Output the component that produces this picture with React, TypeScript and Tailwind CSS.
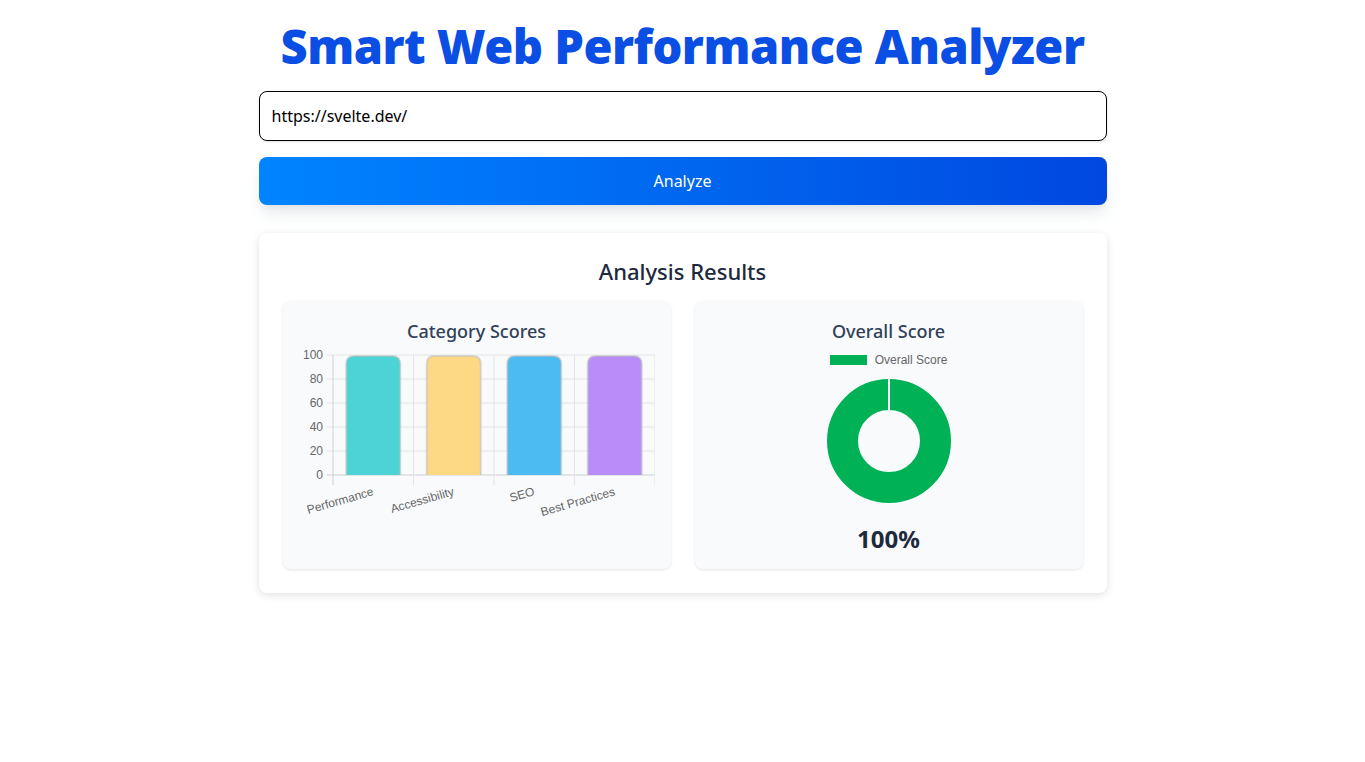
import React from 'react';

const scores = [
  { label: 'Performance', value: 100, fill: '#4bd3d5' },
  { label: 'Accessibility', value: 100, fill: '#fed985' },
  { label: 'SEO', value: 100, fill: '#4bbbf1' },
  { label: 'Best Practices', value: 100, fill: '#b98cf9' },
];

function BarChart() {
  const left = 34;
  const right = 356;
  const top = 10;
  const bottom = 130;
  const step = (right - left) / scores.length;
  const ticks = [100, 80, 60, 40, 20, 0];

  return (
    <svg width="356" height="200" className="block" style={{ fontFamily: '"Liberation Sans", Arial, sans-serif' }}>
      {ticks.map((t, i) => {
        const y = top + i * 24;
        return (
          <g key={t}>
            <line x1={left - 6} x2={right} y1={y} y2={y} stroke={t === 0 ? '#cfcfcf' : '#e4e4e4'} strokeWidth="1" />
            <text x={left - 10} y={y + 4} textAnchor="end" fontSize="12" fill="#666">
              {t}
            </text>
          </g>
        );
      })}
      {[0, 1, 2, 3, 4].map((i) => {
        const x = left + i * step;
        return <line key={i} x1={x} x2={x} y1={top} y2={bottom + 10} stroke={i === 0 ? '#cfcfcf' : '#e4e4e4'} strokeWidth="1" />;
      })}
      {scores.map((s, i) => {
        const cx = left + step * i + step / 2;
        const w = 54;
        const h = ((bottom - top) * s.value) / 100 - 1;
        const x = cx - w / 2;
        const y = bottom - h;
        const r = 8;
        const d = `M${x},${bottom} L${x},${y + r} Q${x},${y} ${x + r},${y} L${x + w - r},${y} Q${x + w},${y} ${x + w},${y + r} L${x + w},${bottom}`;
        return (
          <g key={s.label}>
            <path d={d + ' Z'} fill={s.fill} />
            <path d={d} fill="none" stroke="rgba(190,190,190,0.55)" strokeWidth="2" />
            <text
              x={cx + 1}
              y={150}
              textAnchor="end"
              fontSize="12"
              fill="#666"
              transform={`rotate(-16 ${cx + 1} 150)`}
            >
              {s.label}
            </text>
          </g>
        );
      })}
    </svg>
  );
}

function Doughnut() {
  return (
    <svg width="126" height="126" className="block">
      <circle cx="63" cy="63" r="46.5" fill="none" stroke="#00b155" strokeWidth="31" />
      <line x1="63" x2="63" y1="1" y2="32" stroke="#fff" strokeWidth="2" />
    </svg>
  );
}

export default function App() {
  return (
    <div className="min-h-screen bg-white" style={{ fontFamily: '"Noto Sans", "Open Sans", sans-serif' }}>
      <div className="max-w-4xl mx-auto p-6">
        <h1
          className="text-center text-[47px] leading-[44px] font-black text-[#0a4ee4] tracking-[-0.5px] mb-[23px]"
          style={{ fontFamily: '"Noto Sans", sans-serif' }}
        >
          Smart Web Performance Analyzer
        </h1>
        <input
          type="text"
          defaultValue="https://svelte.dev/"
          className="w-full h-[50px] px-3 rounded-lg border border-black text-black text-base outline-none shadow-sm"
        />
        <button className="w-full h-12 mt-4 rounded-lg text-white text-base bg-linear-to-r from-[#0084ff] to-[#0047e0] shadow-lg shadow-gray-300/60">
          Analyze
        </button>
        <div className="mt-7 bg-white rounded-lg shadow-[0_2px_8px_rgba(0,0,0,0.12)] p-6">
          <h2 className="text-center text-[22px] leading-7 font-medium text-slate-800 mb-4">Analysis Results</h2>
          <div className="grid grid-cols-2 gap-6">
            <div className="bg-slate-50 rounded-lg shadow-[0_1px_3px_rgba(0,0,0,0.1)] p-4 h-[268px]">
              <h3 className="text-center text-lg leading-7 font-medium text-slate-700">Category Scores</h3>
              <BarChart />
            </div>
            <div className="bg-slate-50 rounded-lg shadow-[0_1px_3px_rgba(0,0,0,0.1)] px-4 pt-4 pb-[14px] h-[268px] flex flex-col items-center">
              <h3 className="text-center text-lg leading-7 font-medium text-slate-700">Overall Score</h3>
              <div className="flex items-center gap-2 mt-[7px]" style={{ fontFamily: '"Liberation Sans", Arial, sans-serif' }}>
                <span className="w-[37px] h-[10px] bg-[#00b155]" />
                <span className="text-xs text-[#666]">Overall Score</span>
              </div>
              <div className="mt-[10px]">
                <Doughnut />
              </div>
              <div className="mt-auto text-2xl leading-8 font-bold text-slate-800">100%</div>
            </div>
          </div>
        </div>
      </div>
    </div>
  );
}
